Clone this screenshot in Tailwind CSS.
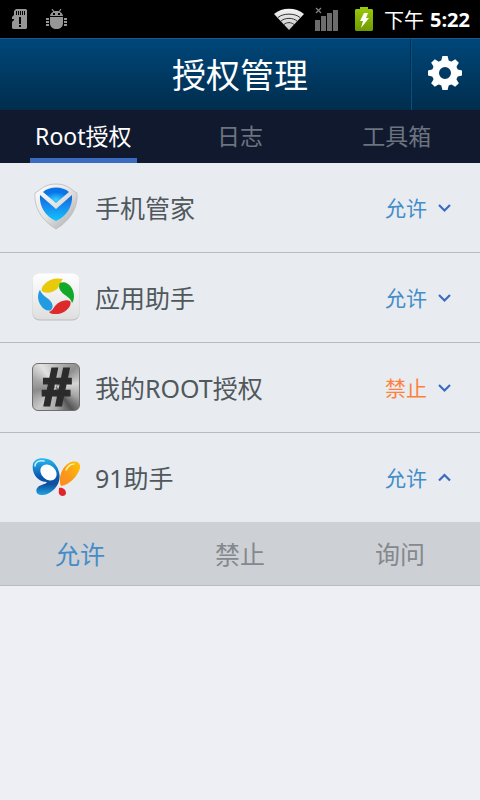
<!DOCTYPE html>
<html lang="zh-CN">
<head>
  <meta charset="UTF-8">
  <meta name="viewport" content="width=device-width, initial-scale=1.0">
  <title>授权管理</title>
  <script src="https://cdn.jsdelivr.net/npm/@tailwindcss/browser@4"></script>
</head>
<body class="min-h-screen bg-[#eeeff4] font-['Noto_Sans','Noto_Sans_CJK_SC',sans-serif] text-[#50585c]">

  <!-- Status bar -->
  <div class="flex h-[38px] items-center justify-between bg-black pl-3 pr-[10px] text-white">
    <div class="flex items-center gap-[18px]">
      <svg class="h-5 w-4" viewBox="0 0 16 20" aria-hidden="true">
        <path fill="#969696" d="M4 0H14L15 1V19L14 20H1L0 19V13L2 11V10H0V8L2 6V2Z"/>
        <path stroke="#000" d="M4.500 2V6M6.500 2V6M8.500 2V6M10.500 2V6M12.500 2V6"/>
        <path fill="#000" d="M7 8H9V15H7ZM7 16H9V18H7Z"/>
      </svg>
      <svg class="h-5 w-[21px]" viewBox="0 0 21 20" aria-hidden="true">
        <g fill="#969696">
          <path d="M4 7C4.500 4 7 2 10.500 2S16.500 4 17 7Z"/>
          <path d="M4 8H17V14C17 18 14 20 10.500 20S4 18 4 14Z"/>
          <path d="M0 9H3V11H0ZM0 12H3V14H0ZM0 15H3V17H0ZM18 9H21V11H18ZM18 12H21V14H18ZM18 15H21V17H18Z"/>
        </g>
        <path stroke="#969696" stroke-width="1.200" d="M6 0L8 3M15 0L13 3"/>
        <path fill="#000" d="M7 4H9V6H7ZM12 4H14V6H12Z"/>
      </svg>
    </div>
    <div class="flex items-center">
      <svg class="h-[22px] w-[30px]" viewBox="0 0 30 22" aria-hidden="true">
        <defs>
          <linearGradient id="wifi" x2="0" y2="1"><stop stop-color="#f4f4f4"/><stop offset="1" stop-color="#c4c4c4"/></linearGradient>
        </defs>
        <path fill="url(#wifi)" d="M0 6C8 -1 22 -1 30 6L15 22Z"/>
        <path fill="none" stroke="#333" d="M4 9.500C9 5 21 5 26 9.500M7 13C11 9.500 19 9.500 23 13M10 16.500C13 14 17 14 20 16.500"/>
      </svg>
      <svg class="ml-[11px] h-[24px] w-[24px]" viewBox="0 0 24 24" aria-hidden="true">
        <path fill="#6c6c6c" d="M0 13H5V24H0ZM6 9H11V24H6ZM12 6H17V24H12ZM18 3H23V24H18Z"/>
        <path stroke="#808080" stroke-width="1.300" d="M1 1L6 6M6 1L1 6"/>
      </svg>
      <svg class="ml-4 h-6 w-[18px]" viewBox="0 0 18 24" aria-hidden="true">
        <defs>
          <linearGradient id="battery" x2="0" y2="1"><stop stop-color="#9bcb0a"/><stop offset="1" stop-color="#6f9a00"/></linearGradient>
        </defs>
        <path fill="url(#battery)" d="M5 0H13V2H17L18 3V23L17 24H1L0 23V3L1 2H5Z"/>
        <path fill="#fff" d="M9 6H13L11 11H14L6 21L8 14H5Z"/>
      </svg>
      <span class="ml-[11px] pt-1 text-[20px] leading-6">下午</span>
      <span class="ml-[6px] pt-0.5 font-['Open_Sans','Noto_Sans',sans-serif] text-[20px] font-bold leading-6">5:22</span>
    </div>
  </div>

  <!-- Title bar -->
  <header class="grid h-[72px] grid-cols-[69px_1fr_69px] border-t border-[#17598a] bg-linear-to-b from-[#00477a] to-[#002d4d] text-white">
    <h1 class="col-start-2 self-center text-center text-[34px] leading-[48px]">授权管理</h1>
    <button type="button" aria-label="设置" class="flex items-center justify-center border-l border-[#0d4d79] pb-1 pr-0.5 shadow-[-1px_0_0_#002f50]">
      <svg class="h-[34px] w-[34px]" viewBox="-17 -17 34 34" aria-hidden="true">
        <circle r="9.500" fill="none" stroke="#fff" stroke-width="7"/>
        <g fill="#fff">
          <path id="tooth" d="M-4 -11L-2.600 -17H2.600L4 -11Z"/>
          <use href="#tooth" transform="rotate(45)"/>
          <use href="#tooth" transform="rotate(90)"/>
          <use href="#tooth" transform="rotate(135)"/>
          <use href="#tooth" transform="rotate(180)"/>
          <use href="#tooth" transform="rotate(225)"/>
          <use href="#tooth" transform="rotate(270)"/>
          <use href="#tooth" transform="rotate(315)"/>
        </g>
      </svg>
    </button>
  </header>

  <!-- Tabs -->
  <nav class="grid h-[53px] grid-cols-3 bg-[#11192e] px-[5px] text-[23px] leading-[44px] text-[#6b747f]">
    <a href="#root" aria-current="page" class="mx-[25px] border-b-[5px] border-[#3a6bbf] pt-1 text-center text-white">Root授权</a>
    <a href="#log" class="pt-1 text-center">日志</a>
    <a href="#tools" class="pt-1 text-center">工具箱</a>
  </nav>

  <main id="root">
    <ul class="divide-y divide-[#b6bbc4] bg-[#e8ecf1]">
      <li class="flex h-[90px] items-center pl-8 pr-7">
        <svg class="mb-0.5 h-12 w-12" viewBox="0 0 48 48" aria-hidden="true">
          <defs>
            <linearGradient id="rim" x2="1" y2="1"><stop stop-color="#fff"/><stop offset=".5" stop-color="#e2e2e2"/><stop offset="1" stop-color="#a5a5a5"/></linearGradient>
            <linearGradient id="shield" x2="0" y2="1"><stop stop-color="#1565cf"/><stop offset=".4" stop-color="#1688ef"/><stop offset="1" stop-color="#12c4fb"/></linearGradient>
            <radialGradient id="dome" cy=".8"><stop stop-color="#35d2ff"/><stop offset="1" stop-color="#0874e8"/></radialGradient>
          </defs>
          <path fill="url(#rim)" stroke="#b8babc" stroke-width=".8" d="M3 10C9 7 12 1 24 1S39 7 45 10C46 24 39 37 24 46C9 37 2 24 3 10Z"/>
          <path fill="url(#shield)" d="M8 12L24 26L40 12C41 23 35 33 24 38C13 33 7 23 8 12Z"/>
          <path fill="url(#dome)" d="M11 9C17 3 31 3 37 9L24 20Z"/>
        </svg>
        <span class="ml-[15px] flex-1 text-[25px] leading-9">手机管家</span>
        <button type="button" aria-expanded="false" class="flex items-center gap-[10px] text-[21px] leading-7 text-[#448dc8]">
          允许
          <svg class="h-4 w-[15px]" viewBox="0 0 15 16" fill="none" stroke="#3a6bbf" stroke-width="2.200" aria-hidden="true"><path d="M2 5L7.500 10.500L13 5"/></svg>
        </button>
      </li>
      <li class="flex h-[90px] items-center pl-8 pr-7">
        <svg class="mb-0.5 h-12 w-12" viewBox="0 0 48 48" aria-hidden="true">
          <defs>
            <linearGradient id="tile" x2="0" y2="1"><stop stop-color="#fff"/><stop offset="1" stop-color="#dedede"/></linearGradient>
          </defs>
          <rect x=".5" y="1.500" width="47" height="46" rx="7" fill="#b9bbbd"/>
          <rect x=".5" y=".5" width="47" height="46" rx="7" fill="url(#tile)"/>
          <path fill="#e8c90c" d="M10 18C8 13 18 3 31 6C29 8 28 12 26 15C22 20 13 21 10 18Z"/>
          <path fill="#10aa28" d="M28 10C35 7 42 15 42 23C42 26 41 29 40 30C39 26 37 25 33 22C27 18 26 13 28 10Z"/>
          <path fill="#dd2a2a" d="M38 28C41 33 32 42 23 41C21 41 19 41 17 39C20 38 21 36 23 33C27 28 34 26 38 28Z"/>
          <path fill="#239be0" d="M19 37C13 40 6 31 6 24C6 21 7 18 8 17C9 20 11 22 15 25C21 29 22 34 19 37Z"/>
        </svg>
        <span class="ml-[15px] flex-1 text-[25px] leading-9">应用助手</span>
        <button type="button" aria-expanded="false" class="flex items-center gap-[10px] text-[21px] leading-7 text-[#448dc8]">
          允许
          <svg class="h-4 w-[15px]" viewBox="0 0 15 16" fill="none" stroke="#3a6bbf" stroke-width="2.200" aria-hidden="true"><path d="M2 5L7.500 10.500L13 5"/></svg>
        </button>
      </li>
      <li class="flex h-[90px] items-center pl-8 pr-7">
        <!-- brushed metal tile -->
        <span class="mb-0.5 flex h-12 w-12 items-center justify-center rounded-[6px] border border-[#6e6e6e] bg-[conic-gradient(from_0deg,#bdbdbd,#8f8f8f_45deg,#d5d5d5_80deg,#a5a5a5_115deg,#555_145deg,#aaa_180deg,#c8c8c8_220deg,#8b8b8b_260deg,#a8a8a8_290deg,#e2e2e2_325deg,#bdbdbd)] font-['Liberation_Sans',sans-serif] text-[52px] font-bold italic leading-[48px] text-[#2b2b2b] [-webkit-text-stroke:3px_#2b2b2b]">#</span>
        <span class="ml-[15px] flex-1 text-[25px] leading-9">我的ROOT授权</span>
        <button type="button" aria-expanded="false" class="flex items-center gap-[10px] text-[21px] leading-7 text-[#ff7f3c]">
          禁止
          <svg class="h-4 w-[15px]" viewBox="0 0 15 16" fill="none" stroke="#3a6bbf" stroke-width="2.200" aria-hidden="true"><path d="M2 5L7.500 10.500L13 5"/></svg>
        </button>
      </li>
      <li class="flex h-[89px] items-center pl-8 pr-7">
        <svg class="h-12 w-12" viewBox="0 0 48 48" aria-hidden="true">
          <defs>
            <linearGradient id="wing" x2="0" y2="1"><stop stop-color="#29b9ef"/><stop offset=".5" stop-color="#0a59b0"/><stop offset=".7" stop-color="#0d4f9e"/><stop offset="1" stop-color="#20a5e2"/></linearGradient>
            <linearGradient id="leaf" x1="1" x2="0" y2="1"><stop stop-color="#ffc400"/><stop offset=".6" stop-color="#f9981c"/><stop offset="1" stop-color="#ff8a1a"/></linearGradient>
          </defs>
          <path fill="url(#wing)" d="M1 10C3 3 14 3 20 7C26 12 29 20 27 27C25 35 16 42 9 41C4 41 3 36 6 33C9 30 13 31 15 28C6 28 -1 19 1 10Z"/>
          <ellipse cx="16.500" cy="18.500" rx="9" ry="7" transform="rotate(42 16.500 18.500)" fill="#fff"/>
          <path fill="none" stroke="#c5efff" stroke-width="1.500" stroke-linecap="round" d="M3 12C3 8 7 6 12 7"/>
          <path fill="url(#leaf)" d="M29 32C26 25 29 14 37 9C43 6 49 8 48 14C46 22 37 31 29 32Z"/>
          <path fill="none" stroke="#fff0a8" stroke-width="1.500" stroke-linecap="round" d="M34 16C36 12 39 10 42 10"/>
          <path fill="#df2430" d="M27 34C31 33 34 36 34 39C34 42 30 43 28 41C26 39 27 37 27 34Z"/>
        </svg>
        <span class="ml-[15px] flex-1 text-[25px] leading-9">91助手</span>
        <button type="button" aria-expanded="true" aria-controls="options" class="flex items-center gap-[10px] text-[21px] leading-7 text-[#448dc8]">
          允许
          <svg class="h-4 w-[15px]" viewBox="0 0 15 16" fill="none" stroke="#3a6bbf" stroke-width="2.200" aria-hidden="true"><path d="M2 10.500L7.500 5L13 10.500"/></svg>
        </button>
      </li>
    </ul>

    <!-- Choices for the open row -->
    <div id="options" class="grid h-16 grid-cols-3 border-b border-[#b6bbc4] bg-[#cdd0d5] text-[25px] leading-9 text-[#85888c]">
      <button type="button" class="text-[#448dc8]">允许</button>
      <button type="button">禁止</button>
      <button type="button">询问</button>
    </div>
  </main>

</body>
</html>
